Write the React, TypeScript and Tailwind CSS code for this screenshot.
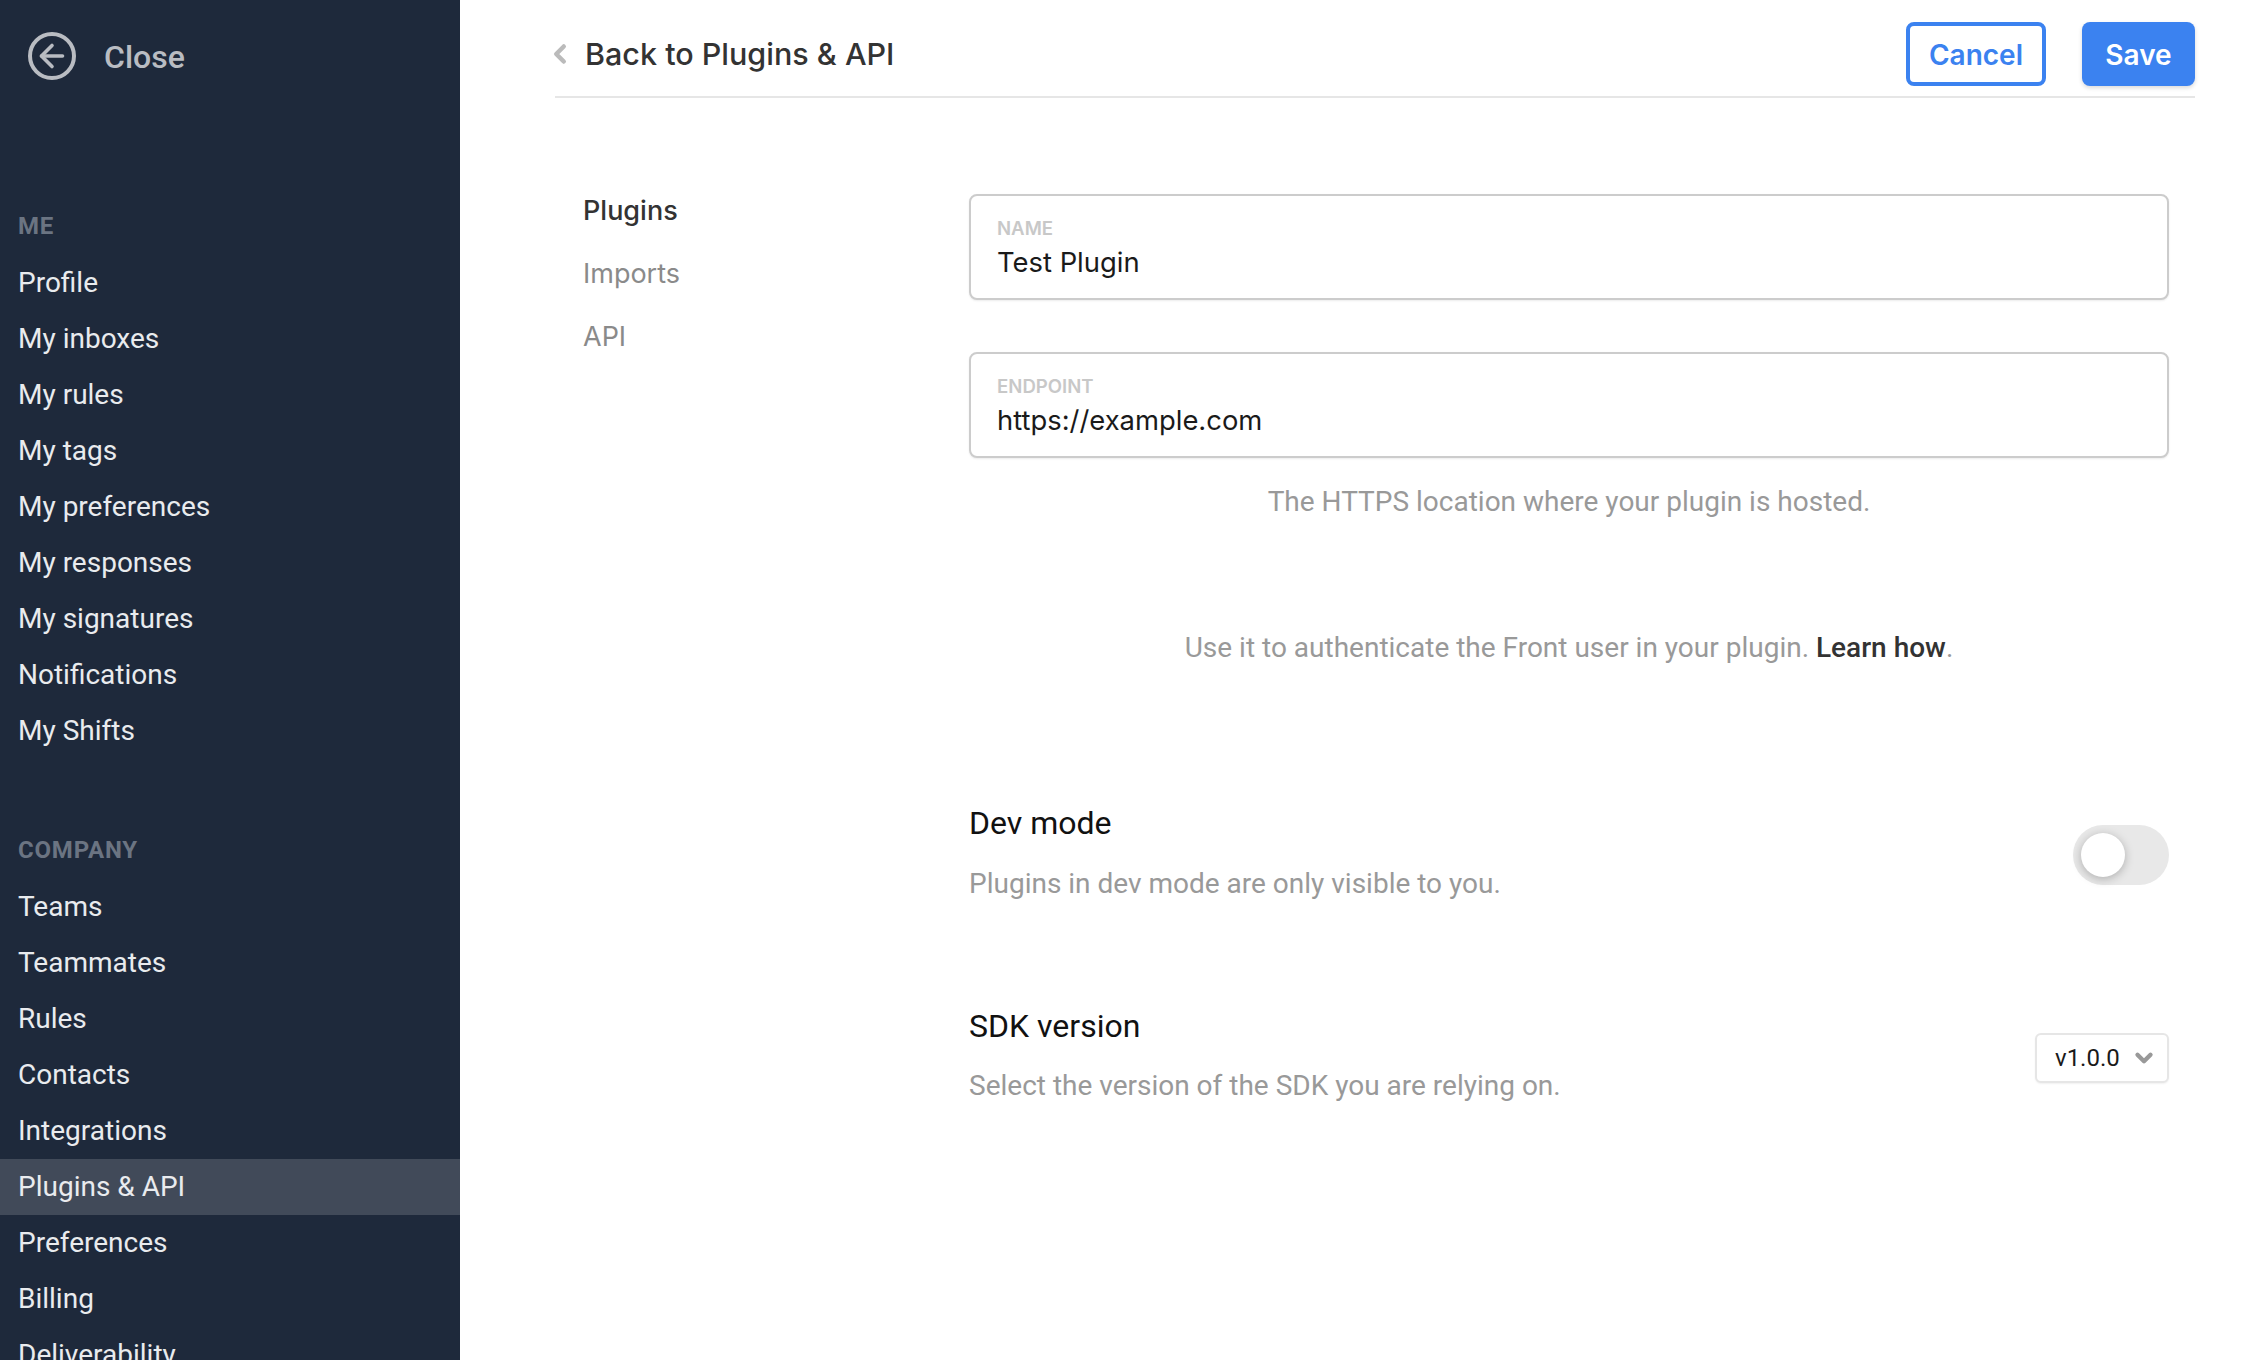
import { ArrowLeft, ChevronDown, ChevronLeft } from "lucide-react";

const meItems = [
  "Profile",
  "My inboxes",
  "My rules",
  "My tags",
  "My preferences",
  "My responses",
  "My signatures",
  "Notifications",
  "My Shifts",
];

const companyItems = [
  "Teams",
  "Teammates",
  "Rules",
  "Contacts",
  "Integrations",
  "Plugins & API",
  "Preferences",
  "Billing",
  "Deliverability",
];

function NavRow({ label }: { label: string }) {
  const active = label === "Plugins & API";
  return (
    <div className={`flex h-14 shrink-0 items-center px-[18px] text-[28px] text-[#e9ebee] ${active ? "bg-[#414a59]" : ""}`}>
      {label}
    </div>
  );
}

function Field({ label, value }: { label: string; value: string }) {
  return (
    <div className="flex h-[106px] flex-col rounded-lg border-2 border-[#cccccc] bg-white pl-[26px] pt-[20px] font-['Inter',sans-serif] shadow-[0_1px_2px_rgba(0,0,0,0.08)]">
      <div className="text-[18.6px] leading-[24px] font-semibold text-[#c8c8c8]">{label}</div>
      <div className="mt-[4px] text-[27.4px] leading-[36px] text-[#1a1a1a]">{value}</div>
    </div>
  );
}

export default function App() {
  return (
    <div className="flex h-[1360px] w-[2248px] overflow-hidden bg-white font-['Roboto',sans-serif]">
      <aside className="flex h-full w-[460px] shrink-0 flex-col overflow-hidden bg-[#1e293b]">
        <div className="flex h-[112px] shrink-0 items-center pl-[28px] text-[#b9bcc2]">
          <div className="flex h-12 w-12 items-center justify-center rounded-full border-4 border-[#b9bcc2]">
            <ArrowLeft size={36} strokeWidth={2.4} className="shrink-0" />
          </div>
          <span className="ml-[28px] mt-[2px] text-[32px] font-medium">Close</span>
        </div>
        <div className="mt-[94px] flex h-10 shrink-0 items-center px-[18px] text-[24px] font-bold tracking-[0.8px] text-[#6b7482]">ME</div>
        <div className="mt-[9px] flex shrink-0 flex-col">
          {meItems.map((m) => (
            <NavRow key={m} label={m} />
          ))}
        </div>
        <div className="mt-[71px] flex h-10 shrink-0 items-center px-[18px] text-[24px] font-bold tracking-[0.8px] text-[#6b7482]">
          COMPANY
        </div>
        <div className="mt-[9px] flex shrink-0 flex-col">
          {companyItems.map((c) => (
            <NavRow key={c} label={c} />
          ))}
        </div>
      </aside>

      <main className="flex-1 pl-[95px] pr-[53px]">
        <header className="flex h-[98px] items-start justify-between border-b-2 border-[#e6e6e6] pt-[22px]">
          <div className="flex h-16 items-center text-[#333333]">
            <ChevronLeft size={30} strokeWidth={3.6} className="-ml-[10px] text-[#bbbbbb]" />
            <span className="ml-[10px] font-['Inter',sans-serif] text-[30.5px] font-medium">Back to Plugins &amp; API</span>
          </div>
          <div className="flex items-center gap-[36px] font-['Inter',sans-serif] text-[28px] font-semibold">
            <button className="h-16 w-[140px] rounded-lg border-4 border-[#3b82f0] bg-white pt-[2px] text-[#3b82f0]">Cancel</button>
            <button className="h-16 w-[113px] rounded-lg bg-[#3b82f0] pt-[2px] text-white shadow-[0_2px_4px_rgba(0,0,0,0.15)]">Save</button>
          </div>
        </header>

        <div className="flex pt-[96px]">
          <nav className="w-[414px] shrink-0 pl-[28px] font-['Inter',sans-serif] text-[27px] text-[#8a8a8a]">
            <div className="flex h-[63px] -translate-y-[14px] items-center font-medium text-[#333333]">Plugins</div>
            <div className="flex h-[63px] -translate-y-[14px] items-center">Imports</div>
            <div className="flex h-[63px] -translate-y-[14px] items-center">API</div>
          </nav>

          <section className="w-[1200px]">
            <Field label="NAME" value="Test Plugin" />
            <div className="mt-[52px]">
              <Field label="ENDPOINT" value="https://example.com" />
            </div>
            <p className="mt-[26px] text-center text-[28px] leading-[36px] text-[#999999]">
              The HTTPS location where your plugin is hosted.
            </p>
            <p className="mt-[110px] text-center text-[28px] leading-[36px] text-[#999999]">
              Use it to authenticate the Front user in your plugin.{" "}
              <span className="font-medium text-[#333333]">Learn how</span>.
            </p>

            <div className="mt-[137px] flex items-start justify-between">
              <div>
                <div className="text-[32px] leading-[40px] text-[#111111]">Dev mode</div>
                <div className="mt-[23px] text-[28px] leading-[36px] text-[#999999]">
                  Plugins in dev mode are only visible to you.
                </div>
              </div>
              <div className="mt-[22px] flex h-[60px] w-[96px] items-center rounded-full bg-[#e8e8e8] pl-2">
                <div className="h-11 w-11 rounded-full bg-white shadow-[0_2px_10px_rgba(0,0,0,0.25)]" />
              </div>
            </div>

            <div className="mt-[104px] flex items-start justify-between">
              <div>
                <div className="text-[32px] leading-[40px] text-[#111111]">SDK version</div>
                <div className="mt-[22px] text-[28px] leading-[36px] text-[#999999]">
                  Select the version of the SDK you are relying on.
                </div>
              </div>
              <div className="mt-[27px] flex h-[50px] w-[134px] items-center justify-between rounded-md border-2 border-[#e6e6e6] bg-white pl-[18px] pr-[10px] text-[24px] text-[#1a1a1a] shadow-[0_1px_2px_rgba(0,0,0,0.06)]">
                v1.0.0
                <ChevronDown size={26} strokeWidth={4} className="text-[#999999]" />
              </div>
            </div>
          </section>
        </div>
      </main>
    </div>
  );
}
